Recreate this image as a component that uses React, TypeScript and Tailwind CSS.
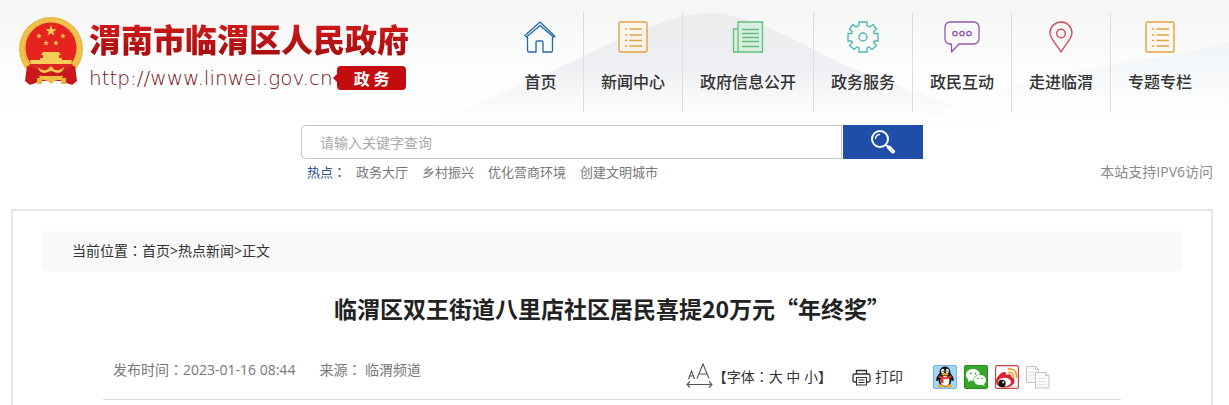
import { useState } from 'react';
import type { ReactNode } from 'react';

interface NavItem {
  label: string;
  icon: ReactNode;
}

function ListIcon() {
  return (
    <svg width="32" height="32" viewBox="0 0 32 32" fill="none" stroke="#e0a244" strokeWidth="1.4">
      <rect x="2" y="1" width="28" height="30" rx="1.5" fill="#fdf6ea" fillOpacity=".6" />
      <path d="M12.5 8H25M12.5 14H25M12.5 19.500H25M12.500 25H25M8 8h2M8 14h2M8 19.500h2M8 25h2" strokeWidth="1.700" />
    </svg>
  );
}

const navItems: NavItem[] = [
  {
    label: '首页',
    icon: (
      <svg width="32" height="32" viewBox="0 0 32 32" fill="none" stroke="#2368a8" strokeWidth="1.3" strokeLinejoin="round">
        <path d="M1 14.500 16 1l15 14.500-1.500.500L16 4.500 2.500 16Z" />
        <path d="M3.500 16v13.500a1.500 1.500 0 0 0 1.500 1.500h7V21.500a1.500 1.500 0 0 1 1.500-1.500h4a1.500 1.500 0 0 1 1.500 1.500V31h8a1.500 1.500 0 0 0 1.500-1.500V16" />
      </svg>
    ),
  },
  { label: '新闻中心', icon: <ListIcon /> },
  {
    label: '政府信息公开',
    icon: (
      <svg width="32" height="32" viewBox="0 0 32 32" fill="none" stroke="#63bf78" strokeWidth="1.3">
        <path d="M6 8H1.500v23H30.500V1H6v30" fill="#cdeed5" fillOpacity=".6" />
        <path d="M10 8.500h17M10 12.500h17M10 16.500h17M10 20.500h17M10 25.500h17" strokeWidth="1.500" />
      </svg>
    ),
  },
  {
    label: '政务服务',
    icon: (
      <svg width="32" height="32" viewBox="0 0 32 32" fill="none" stroke="#4bb5b7" strokeWidth="1.3">
        <path d="M12 1h8v3.500l3 1.500 3-2.500L29.500 8 26.500 11l1 1.500H31v7.500h-3.500l-1 1.500 3 3-4.500 4-3-2.500-2 1V31h-8v-4l-2-1-3 2.500-4.500-4 3-3-1-1.500H1v-7.500h3.500l1-1.500-3-3L6 3.500 9 6l3-1.500Z" />
        <circle cx="16" cy="16" r="4" />
      </svg>
    ),
  },
  {
    label: '政民互动',
    icon: (
      <svg width="36" height="32" viewBox="0 0 36 32" fill="none" stroke="#9458ad" strokeWidth="1.3" strokeLinejoin="round">
        <path d="M6 1h24a5 5 0 0 1 5 5v12a5 5 0 0 1-5 5H15l-7.500 8V23H6a5 5 0 0 1-5-5V6a5 5 0 0 1 5-5Z" />
        <circle cx="11" cy="12.500" r="2.200" />
        <circle cx="18" cy="12.500" r="2.200" />
        <circle cx="25" cy="12.500" r="2.200" />
      </svg>
    ),
  },
  {
    label: '走进临渭',
    icon: (
      <svg width="32" height="32" viewBox="0 0 32 32" fill="none" stroke="#cf4c62" strokeWidth="1.4" strokeLinejoin="round">
        <path d="M16 31C12 24 5 17.500 5 12a11 11 0 0 1 22 0C27 17.500 20 24 16 31Z" />
        <circle cx="16" cy="12.500" r="4.300" />
      </svg>
    ),
  },
  { label: '专题专栏', icon: <ListIcon /> },
];

const hotWords = ['政务大厅', '乡村振兴', '优化营商环境', '创建文明城市'];

const star = 'M0-1 .23-.31.95-.31.36.12.59.81 0 .38-.59.81-.36.12-.95-.31-.23-.31Z';

function Emblem() {
  return (
    <svg width="64" height="70" viewBox="0 0 64 70" className="shrink-0" aria-hidden="true">
      <path d="M9 49 8 67l6 1 6-3h24l6 3 6-1-1-18Z" fill="#c3171b" />
      <circle cx="32" cy="33" r="32" fill="#eab744" />
      <circle cx="32" cy="33" r="29" fill="none" stroke="#f2c550" strokeWidth="3" strokeDasharray="4 1" />
      <circle cx="32" cy="32" r="25.500" fill="#e52420" />
      <g fill="#f6ce57">
        <path d={star} transform="translate(32 15) scale(6)" />
        <path d={star} transform="translate(20 20) scale(3)" />
        <path d={star} transform="translate(44 20) scale(3)" />
        <path d={star} transform="translate(27 27) scale(3)" />
        <path d={star} transform="translate(37 27) scale(3)" />
        <path d="M24 36h16l2 3h-2v3h3v2H21v-2h3v-3h-2ZM11 44h42l-1 4H12Z" />
      </g>
      <path d="M11 48h42l3 5c-7-1-11 4-17 6H25c-6-2-10-7-17-6Z" fill="#dc2420" />
      <path d="M8 50c6 0 11 6 19 6l5-5 5 5c8 0 13-6 19-6l2 15-5 4-7-3-4-6H22l-4 6-7 3-5-4Z" fill="#c9171b" />
      <path d="M19 51c4 4 8 4 10 2l3-3 3 3c2 2 6 2 10-2-1 6-6 7-10 5l-3-1-3 1c-4 2-9 1-10-5Z" fill="#f3c650" />
      <path d="M20 60c5-1 6 3 12 1 6 2 7-2 12-1l-2 4h-5l-5 4-5-4h-5Z" fill="#f0bc43" />
      <path d="M18 62h5v6h-5ZM42 62h5v6h-5Z" fill="#e9b440" />
    </svg>
  );
}

function HeaderBackdrop() {
  return (
    <svg
      className="absolute inset-0 -z-10 h-full w-full"
      viewBox="0 0 1229 209"
      preserveAspectRatio="none"
      aria-hidden="true"
    >
      <defs>
        <linearGradient id="sky" x1="0" y1="0" x2="0" y2="1">
          <stop offset="0" stopColor="#f5f5f5" />
          <stop offset=".35" stopColor="#fcfdfd" />
          <stop offset=".6" stopColor="#ffffff" />
        </linearGradient>
        <linearGradient id="hill" x1="0" y1="0" x2="0" y2="1">
          <stop offset="0" stopColor="#ebecee" />
          <stop offset=".5" stopColor="#eff0f3" />
          <stop offset="1" stopColor="#ffffff" />
        </linearGradient>
        <linearGradient id="wave" x1="0" y1="0" x2="0" y2="1">
          <stop offset="0" stopColor="#f0f4f7" />
          <stop offset="1" stopColor="#ffffff" />
        </linearGradient>
      </defs>
      <rect width="1229" height="209" fill="url(#sky)" />
      <path d="M430 124C500 95 560 68 600 48 650 26 680 12 715 13 755 17 790 38 830 58 880 82 940 100 1010 124Z" fill="url(#hill)" />
      <path d="M930 120C1010 82 1070 72 1130 62 1170 56 1200 50 1229 42V120Z" fill="url(#wave)" />
    </svg>
  );
}

function FontSizeIcon() {
  return (
    <svg width="27" height="26" viewBox="0 0 27 26" fill="none" stroke="#555" strokeWidth="1.1" aria-hidden="true">
      <path d="M2.500 16 5.500 8 8.500 16M3.500 13h4M11 15.500 17 1l6 14.500M13 11h8M1 21.500h25M4 18.500l-3 3 3 3M23 18.500l3 3-3 3" />
    </svg>
  );
}

function PrintIcon() {
  return (
    <svg width="19" height="17" viewBox="0 0 19 17" fill="none" stroke="#333" strokeWidth="1.3" aria-hidden="true">
      <path d="M4.500 5V1.500h10V5M4.500 13H2.500a1.500 1.500 0 0 1-1.500-1.500v-5A1.500 1.500 0 0 1 2.500 5h14A1.500 1.500 0 0 1 18 6.500v5a1.500 1.500 0 0 1-1.500 1.500h-2" />
      <path d="M4.500 8.500h10v7.500h-10ZM6.500 11h6M6.500 13.500h6" strokeWidth="1.100" />
    </svg>
  );
}

function QqIcon() {
  return (
    <svg width="24" height="24" viewBox="0 0 24 24">
      <rect x=".5" y=".5" width="23" height="23" rx="1.500" fill="#a5d5f5" stroke="#72b5e4" />
      <path d="M12 1.500c-4 0-5.500 3-5.500 6.500-3 4-3.800 6-3 8 1 0 1.500-.5 2-1.500C6 20 8 21.500 12 21.500s6-1.500 6.500-7c.5 1 1 1.500 2 1.500.8-2 0-4-3-8 0-3.500-1.500-6.500-5.500-6.500Z" fill="#16181d" />
      <ellipse cx="12" cy="16" rx="4.500" ry="5" fill="#fff" />
      <ellipse cx="9.700" cy="6" rx="1.600" ry="2.200" fill="#fff" />
      <ellipse cx="14.300" cy="6" rx="1.600" ry="2.200" fill="#fff" />
      <path d="M10 5.500v1.500M14 5.500v1.500" stroke="#111" />
      <ellipse cx="12" cy="9.200" rx="3.500" ry="1.300" fill="#f6a51c" />
      <path d="M6 10c4 3 8 3 12 0l.5 2.500C16 14 13 14.500 10.500 14v4H8v-4.500l-2.500-1Z" fill="#e33b28" />
      <path d="M5 21c1-2 5-2 6 0 0 2-6 2-6 0ZM13 21c1-2 5-2 6 0 0 2-6 2-6 0Z" fill="#f6a51c" />
    </svg>
  );
}

function WechatIcon() {
  return (
    <svg width="24" height="24" viewBox="0 0 24 24">
      <rect x=".5" y=".5" width="23" height="23" rx="1.500" fill="#3aa52c" stroke="#258c1c" />
      <path d="M9 4C5 4 2 6.500 2 10c0 2 1 3.500 2.500 4.500L4 17l2.500-1.500c1 .3 2 .4 3 .3C9 12 12 9.500 16 9.500 15.500 6 12.500 4 9 4Z" fill="#fff" />
      <path d="M16 10c-3.500 0-6 2-6 5s2.500 5 6 5c.8 0 1.500-.1 2.200-.3l2.300 1.300-.5-2c1.300-1 2-2.500 2-4 0-3-2.500-5-6-5Z" fill="#fff" />
      <g fill="#3aa52c">
        <circle cx="6.800" cy="8.500" r=".9" />
        <circle cx="11.500" cy="8.500" r=".9" />
        <circle cx="14" cy="13.500" r=".8" />
        <circle cx="18" cy="13.500" r=".8" />
      </g>
    </svg>
  );
}

function WeiboIcon() {
  return (
    <svg width="24" height="24" viewBox="0 0 24 24">
      <rect x=".6" y=".6" width="22.800" height="22.800" rx="1.500" fill="#fff" stroke="#d3413c" strokeWidth="1.200" />
      <path d="M9 7c2-.5 2.500 1 2 3 3-1.500 6-1 5 1.800 2.500.7 3.500 2 3.500 4 0 4-4 6.700-9.500 6.700S1 20 1 16.500C1 12 6 7.500 9 7Z" fill="#dc2230" />
      <ellipse cx="9.500" cy="17" rx="6.500" ry="4.300" fill="#fff" />
      <circle cx="7" cy="18.500" r="3.700" fill="#171414" />
      <circle cx="8.200" cy="17.300" r="1" fill="#fff" />
      <path d="M13.500 7.500c3-.8 5.500 1.500 4.700 4.500M13.500 4c5-1 9 3.500 7.700 8.500" fill="none" stroke="#eda13b" strokeWidth="1.800" strokeLinecap="round" />
    </svg>
  );
}

function CopyIcon() {
  return (
    <svg width="24" height="24" viewBox="0 0 24 24" fill="#fafafa" stroke="#c4c4c4">
      <path d="M.5 1.500h9l3 3v13h-12ZM9.500 1.500v3h3" />
      <path d="M2.500 7h7M2.500 10h7M2.500 13h7" stroke="#e2e2e2" />
      <path d="M9.500 7.500h10l3.500 3v12.500H9.500ZM19.500 7.500v3H23" />
      <path d="M12 13.500h8M12 16.500h8M12 19.500h8" stroke="#e2e2e2" />
    </svg>
  );
}

const shares = [
  { name: 'QQ', icon: <QqIcon /> },
  { name: '微信', icon: <WechatIcon /> },
  { name: '微博', icon: <WeiboIcon /> },
  { name: '复制', icon: <CopyIcon /> },
];

// The TC face centres the full-width colon in its cell
function Colon() {
  return (
    <span lang="zh-TW" className="font-['Noto_Sans_CJK_TC',sans-serif] leading-none">
      ：
    </span>
  );
}

export default function App() {
  const [keyword, setKeyword] = useState('');

  return (
    <div
      lang="zh-CN"
      className="flex min-h-screen flex-col bg-white font-['Open_Sans','Noto_Sans_CJK_SC',sans-serif] text-sm text-[#333]"
    >
      <header className="relative isolate pr-4 pl-[11px]">
        <HeaderBackdrop />
        <div className="flex items-start justify-between pt-3">
          <a href="#" className="flex gap-[6px] pt-1 pl-2">
            <Emblem />
            <div>
              <div className="bg-linear-to-b from-[#dc1c1c] to-[#a00c0f] bg-clip-text font-['Noto_Sans_CJK_SC',sans-serif] text-[32px] leading-[44px] font-black text-transparent">
                渭南市临渭区人民政府
              </div>
              <div className="flex h-9 items-center">
                <span className="font-['DejaVu_Sans',sans-serif] text-xl leading-6 font-extralight text-[#7a0f18]">
                  http://www.linwei.gov.cn
                </span>
                <span className="h-0 w-0 border-y-4 border-r-4 border-y-transparent border-r-[#c40b0f]" />
                <span className="rounded-sm bg-[#c40b0f] px-[17px] font-['Noto_Sans_CJK_SC',sans-serif] text-base leading-6 font-bold text-white">
                  政 务
                </span>
              </div>
            </div>
          </a>
          <nav className="flex pr-1">
            {navItems.map((item) => (
              <a
                key={item.label}
                href="#"
                className="flex h-[100px] min-w-[86px] flex-col items-center border-r border-[#dddee2] px-[17px] pt-[9px] text-base leading-6 font-medium text-[#333] last:border-r-0"
              >
                {item.icon}
                <span className="mt-[17px]">{item.label}</span>
              </a>
            ))}
          </nav>
        </div>

        <form className="mx-auto mt-[13px] flex w-[622px] max-w-full gap-px" onSubmit={(e) => e.preventDefault()}>
          <input
            type="text"
            aria-label="关键字"
            value={keyword}
            onChange={(e) => setKeyword(e.target.value)}
            placeholder="请输入关键字查询"
            className="h-[34px] min-w-0 flex-1 rounded-l border border-[#c8c8c8] bg-white px-[18px] text-sm outline-none placeholder:text-[#aaa]"
          />
          <button type="submit" aria-label="搜索" className="flex h-[34px] w-20 items-center justify-center bg-[#1f4ea9]">
            <svg width="26" height="26" viewBox="0 0 26 26" fill="none" stroke="#fff" strokeLinecap="round">
              <circle cx="10" cy="10" r="8" strokeWidth="2" />
              <path d="M5.500 9.500c.3-2.300 1.700-3.700 4-4" strokeWidth="1.300" />
              <path d="m16 16 2 2" strokeWidth="2" />
              <path d="m19 18.500 4 4" strokeWidth="4" />
            </svg>
          </button>
        </form>

        <div className="flex items-center pt-px pb-[25px] text-[#888]">
          <div className="w-[296px] shrink-0" />
          <div className="flex gap-[14px] text-[13px] leading-6">
            <span className="-mr-1 text-[#2d558f]">
              热点
              <Colon />
            </span>
            {hotWords.map((word) => (
              <a key={word} href="#" className="text-[#777]">
                {word}
              </a>
            ))}
          </div>
          <a href="#" className="ml-auto leading-6">
            本站支持IPV6访问
          </a>
        </div>
      </header>

      <main className="mr-4 ml-[11px] flex-1 border-2 border-b-0 border-[#e4e4e4] px-[29px] pt-5">
        <div className="bg-[#f9f9f9] px-[30px] leading-10 text-[#333]">
          当前位置
          <Colon />
          <a href="#">首页</a>&gt;<a href="#">热点新闻</a>&gt;<a href="#">正文</a>
        </div>
        <article className="px-[61px]">
          <h1 className="mt-[19px] text-center font-['Noto_Sans_CJK_SC',sans-serif] text-[23px] leading-9 font-bold text-[#222]">
            临渭区双王街道八里店社区居民喜提20万元“年终奖”
          </h1>
          <div className="mt-[34px] flex items-start border-b border-[#ddd] pr-[71px] pb-[10px] pl-[10px]">
            <div className="flex gap-6 text-[#777]">
              <span>
                发布时间
                <Colon />
                2023-01-16 08:44
              </span>
              <span>
                来源
                <Colon /> 临渭频道
              </span>
            </div>
            <div className="ml-auto flex items-end pt-[3px]">
              <div className="flex items-end">
                <FontSizeIcon />
                <span className="leading-6">
                  【字体
                  <Colon />
                  <button type="button">大</button> <button type="button">中</button>{' '}
                  <button type="button">小</button>】
                </span>
              </div>
              <button type="button" className="ml-5 flex items-center gap-1 leading-6">
                <PrintIcon />
                打印
              </button>
              <div className="ml-[30px] flex gap-[7px]">
                {shares.map((share) => (
                  <a key={share.name} href="#" aria-label={share.name}>
                    {share.icon}
                  </a>
                ))}
              </div>
            </div>
          </div>
        </article>
      </main>
    </div>
  );
}
